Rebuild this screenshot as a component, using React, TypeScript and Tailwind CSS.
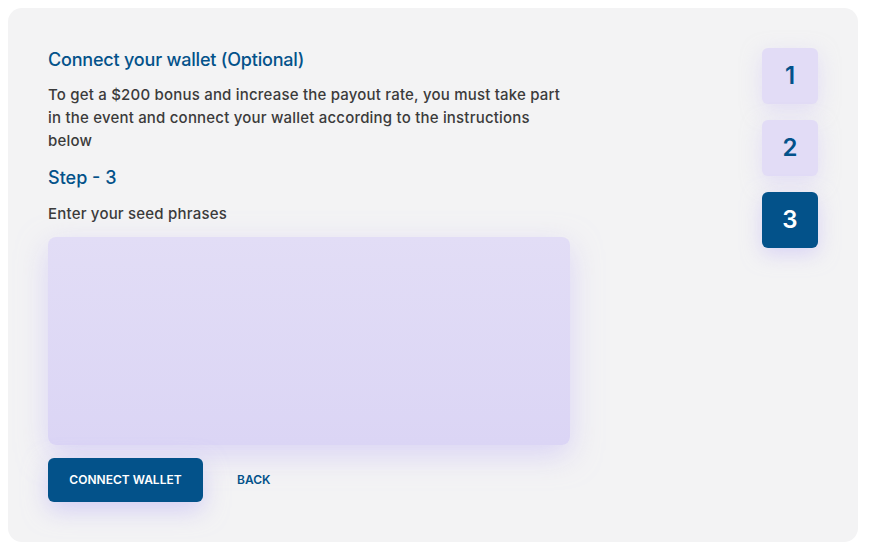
import React from "react";

export default function App() {
  const font = { fontFamily: "Inter, 'Noto Sans', sans-serif" };
  return (
    <div className="min-h-[551px] w-full bg-white pt-2 pl-2" style={font}>
      <div className="flex h-[534px] w-[850px] justify-between rounded-[14px] bg-[#f3f3f4] pl-10 pr-10 pt-[40px]">
        <div className="flex w-[522px] flex-col">
          <h1 className="text-[18px] font-medium leading-[24px] tracking-[-0.2px] text-[#03528a]">
            Connect your wallet (Optional)
          </h1>
          <p className="mt-[11px] text-[15px] font-medium leading-[23px] tracking-[0.2px] text-[#3b3b3b]">
            To get a $200 bonus and increase the payout rate, you must take part in the event and connect your wallet according to the instructions below
          </p>
          <h2 className="mt-[14px] text-[18px] font-medium leading-[24px] text-[#03528a]">Step - 3</h2>
          <p className="mt-[14px] text-[15px] font-medium leading-[20px] tracking-[0.2px] text-[#3b3b3b]">Enter your seed phrases</p>
          <textarea
            className="mt-[13px] h-[208px] w-[522px] resize-none rounded-[8px] bg-gradient-to-b from-[#e2ddf6] to-[#dbd5f5] shadow-[0_10px_30px_rgba(196,186,245,0.55)] outline-none"
          />
          <div className="mt-[13px] flex items-center gap-[34px]">
            <button className="h-[44px] w-[155px] rounded-[6px] bg-[#03528a] text-[12px] font-semibold text-white shadow-[0_8px_24px_rgba(190,180,245,0.6)]">
              CONNECT WALLET
            </button>
            <button className="text-[12px] font-semibold text-[#03528a]">BACK</button>
          </div>
        </div>
        <div className="flex flex-col gap-4">
          {[1, 2, 3].map((n) => (
            <div
              key={n}
              className={
                n === 3
                  ? "flex h-[56px] w-[56px] items-center justify-center rounded-[6px] bg-[#03528a] text-[24px] font-semibold text-white shadow-[0_6px_20px_rgba(200,190,245,0.6)]"
                  : "flex h-[56px] w-[56px] items-center justify-center rounded-[6px] bg-[#e2dcf6] text-[24px] font-semibold text-[#03528a] shadow-[0_6px_20px_rgba(210,200,245,0.5)]"
              }
            >
              {n}
            </div>
          ))}
        </div>
      </div>
    </div>
  );
}
